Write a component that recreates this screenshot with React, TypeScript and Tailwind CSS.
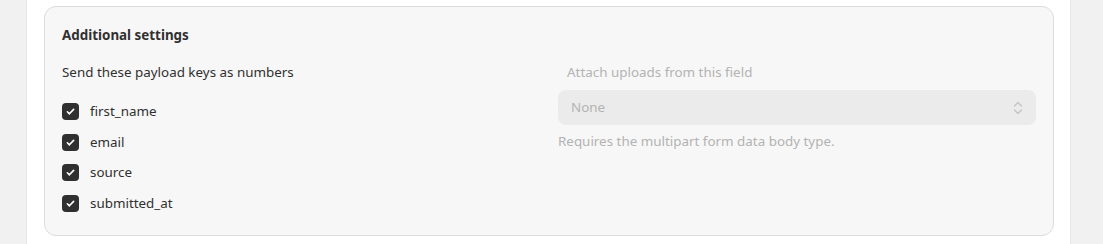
import React from "react";

const keys = ["first_name", "email", "source", "submitted_at"];

function Check() {
  return (
    <span className="flex h-[17px] w-[17px] items-center justify-center rounded-[4px] bg-[#303030]">
      <svg width="11" height="11" viewBox="0 0 12 12" fill="none">
        <path d="M2.6 6.3l2.2 2.2 4.6-4.8" stroke="#fff" strokeWidth="1.8" strokeLinecap="round" strokeLinejoin="round" />
      </svg>
    </span>
  );
}

export default function App() {
  return (
    <div className="flex h-[244px] w-[1103px] bg-[#f1f1f1] text-[13.4px] text-[#303030]" style={{ fontFamily: '"Noto Sans", "Open Sans", sans-serif' }}>
      <div className="w-[27px] shrink-0 border-r border-[#e6e6e6]" />
      <div className="flex w-[1043px] shrink-0 flex-col bg-white pl-[17px] pr-[16px] pt-[6px]">
        <div className="h-[230px] rounded-[12px] border border-[#dcdcdc] bg-[#f7f7f7] pl-[17px] pr-[17px] pt-[17px]">
          <div className="font-bold leading-[22px]">Additional settings</div>
          <div className="mt-[15px] grid grid-cols-2 gap-[18px]">
            <div>
              <div className="leading-[22px]">Send these payload keys as numbers</div>
              <div className="mt-[20px] flex flex-col gap-[13.5px]">
                {keys.map((k) => (
                  <label key={k} className="flex h-[17px] items-center gap-[11px]">
                    <Check />
                    <span>{k}</span>
                  </label>
                ))}
              </div>
            </div>
            <div>
              <div className="pl-[9px] leading-[22px] text-[#b3b3b3]">Attach uploads from this field</div>
              <div className="mt-[7px] flex h-[35px] items-center justify-between rounded-[8px] bg-[#ebebeb] pl-[13px] pr-[12px] text-[#b3b3b3]">
                <span>None</span>
                <svg width="12" height="18" viewBox="0 0 12 18" fill="none">
                  <path d="M2.5 7L6 3.5 9.5 7M2.5 11L6 14.5 9.5 11" stroke="#c4c4c4" strokeWidth="1.3" strokeLinecap="round" strokeLinejoin="round" />
                </svg>
              </div>
              <div className="mt-[5px] leading-[22px] text-[#b3b3b3]">Requires the multipart form data body type.</div>
            </div>
          </div>
        </div>
      </div>
      <div className="flex-1 border-l border-[#e6e6e6]" />
    </div>
  );
}
